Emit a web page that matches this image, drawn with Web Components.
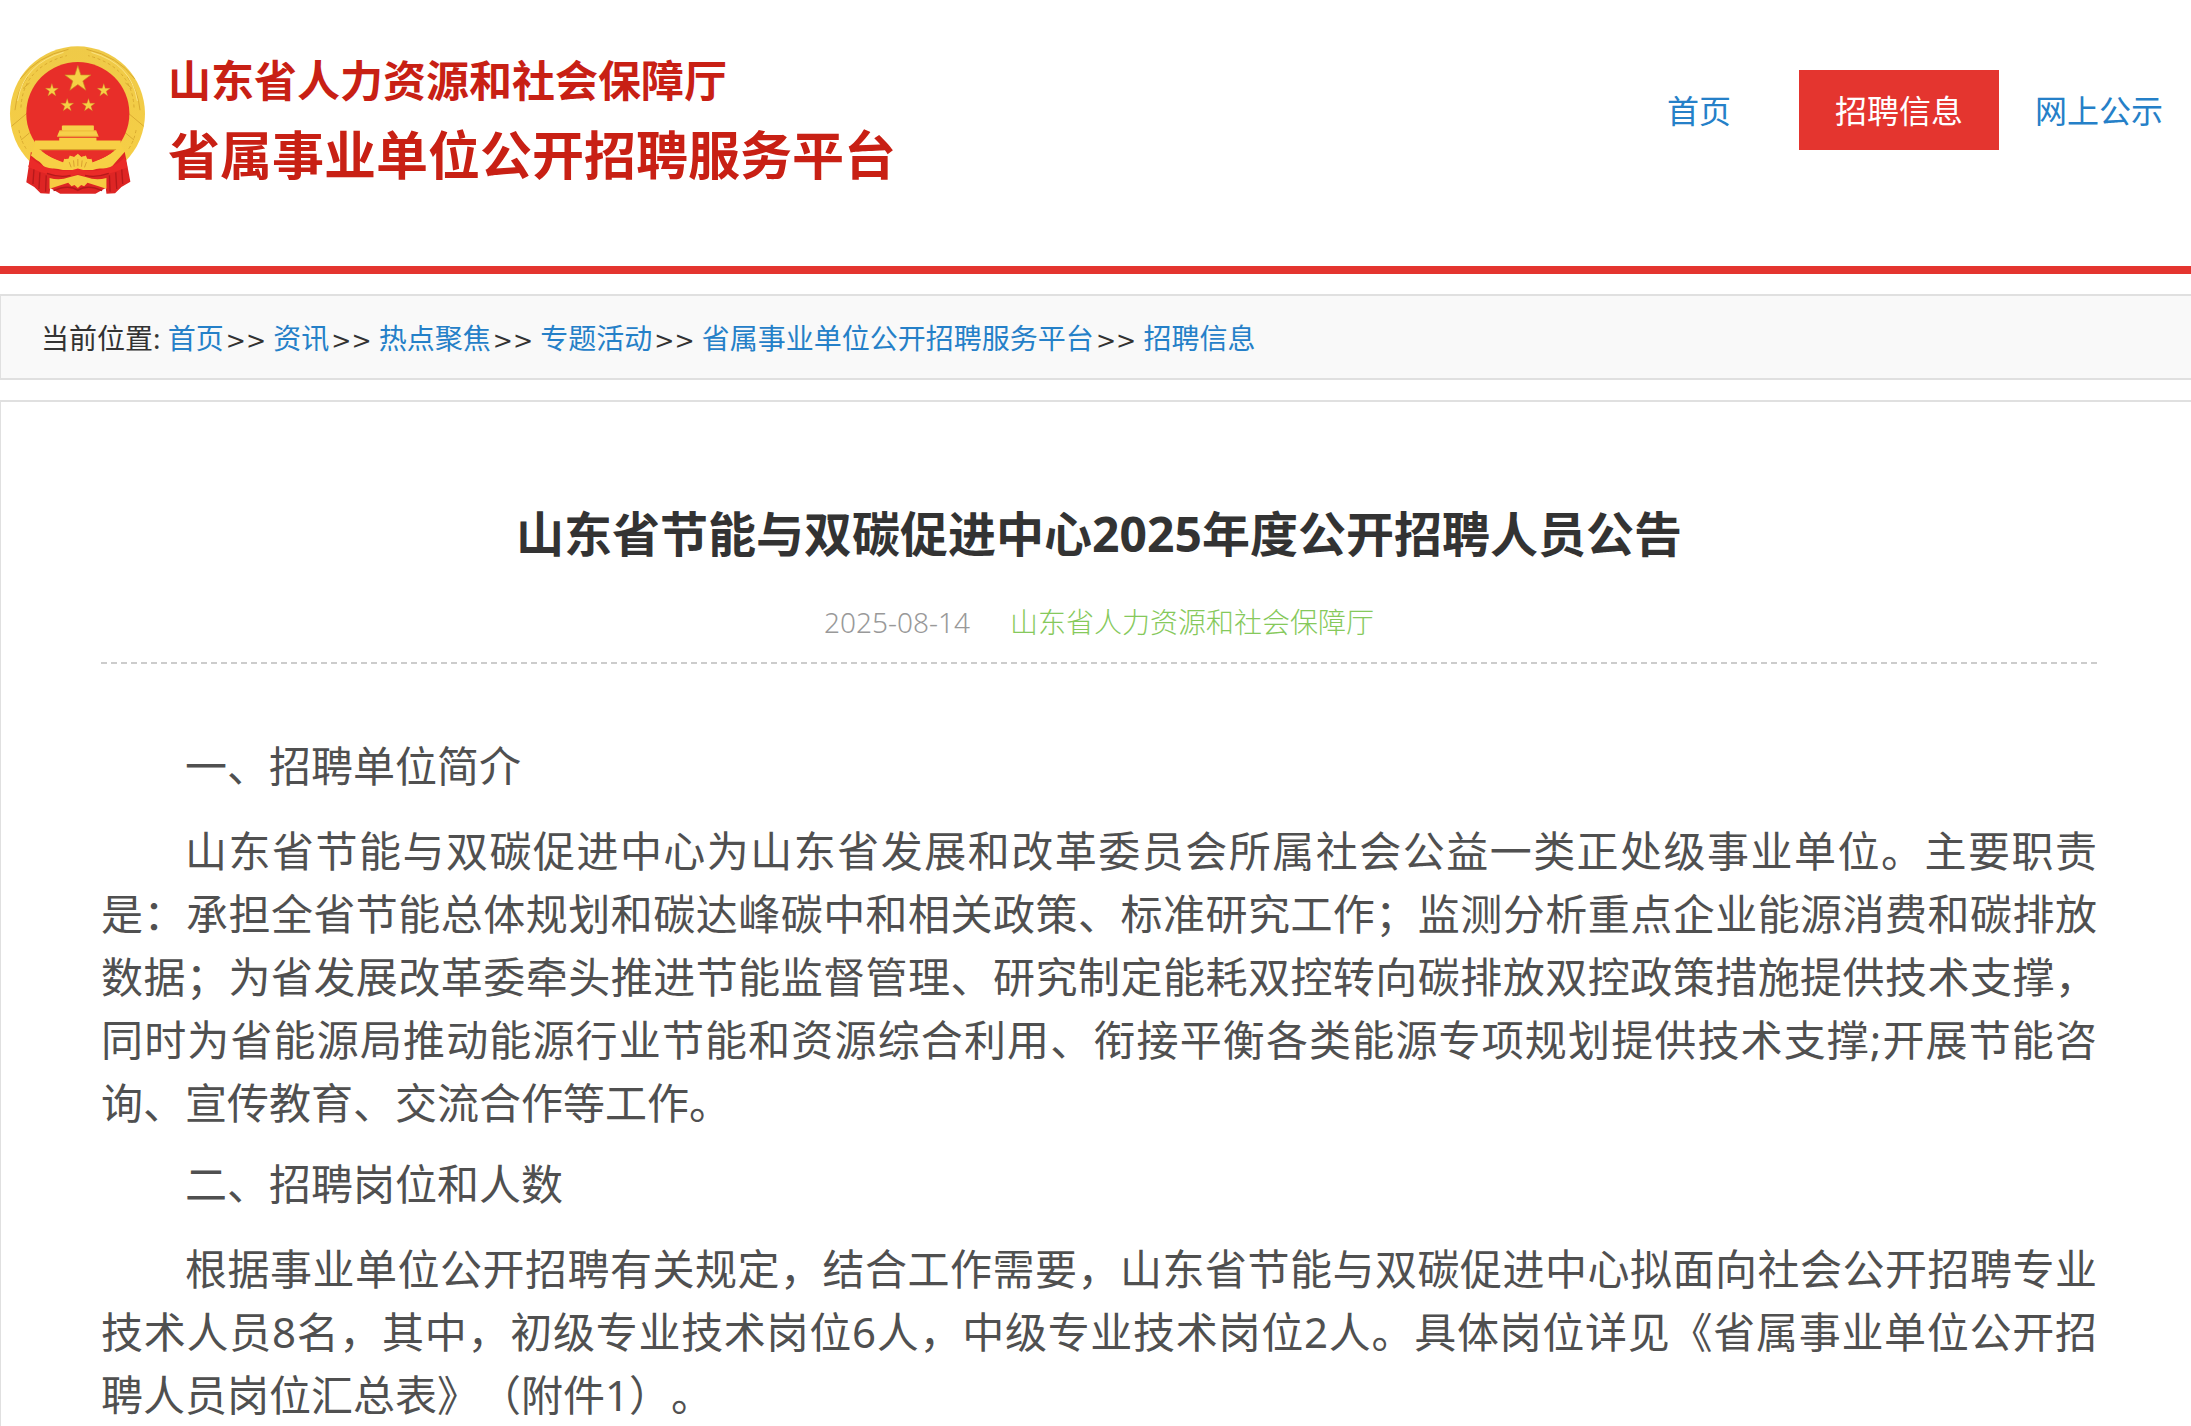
<!DOCTYPE html>
<html lang="zh-CN">
<head>
<meta charset="utf-8">
<meta name="viewport" content="width=device-width, initial-scale=1">
<title>山东省节能与双碳促进中心2025年度公开招聘人员公告</title>
<style>
    html, body { margin: 0; overflow-x: hidden; }
    body {
        --red: #e4352f;
        --link: #2580c8;
        --line: #e0e0e0;
        font-family: "Noto Sans", "Noto Sans CJK SC", sans-serif;
        font-size: 28px;
        color: #333;
        background: #fff;
        text-spacing-trim: space-all;
    }
</style>
</head>
<body>
<page-shell>
    <site-header slot="header">
        <site-logo slot="logo">
            <span slot="dept">山东省人力资源和社会保障厅</span>
            <span slot="platform">省属事业单位公开招聘服务平台</span>
        </site-logo>
        <nav-item href="#home">首页</nav-item>
        <nav-item href="#jobs" active>招聘信息</nav-item>
        <nav-item href="#notice">网上公示</nav-item>
    </site-header>
    <bread-crumb>
        <crumb-link href="#home">首页</crumb-link>
        <crumb-link href="#news">资讯</crumb-link>
        <crumb-link href="#focus">热点聚焦</crumb-link>
        <crumb-link href="#topics">专题活动</crumb-link>
        <crumb-link href="#platform">省属事业单位公开招聘服务平台</crumb-link>
        <crumb-link href="#jobs" last>招聘信息</crumb-link>
    </bread-crumb>
    <news-article>
        <span slot="title">山东省节能与双碳促进中心2025年度公开招聘人员公告</span>
        <span slot="date">2025-08-14</span>
        <span slot="source">山东省人力资源和社会保障厅</span>
        <article-section>
            <span slot="heading">一、招聘单位简介</span>
            山东省节能与双碳促进中心为山东省发展和改革委员会所属社会公益一类正处级事业单位。主要职责是：承担全省节能总体规划和碳达峰碳中和相关政策、标准研究工作；监测分析重点企业能源消费和碳排放数据；为省发展改革委牵头推进节能监督管理、研究制定能耗双控转向碳排放双控政策措施提供技术支撑，同时为省能源局推动能源行业节能和资源综合利用、衔接平衡各类能源专项规划提供技术支撑;开展节能咨询、宣传教育、交流合作等工作。
        </article-section>
        <article-section>
            <span slot="heading">二、招聘岗位和人数</span>
            根据事业单位公开招聘有关规定，结合工作需要，山东省节能与双碳促进中心拟面向社会公开招聘专业技术人员8名，其中，初级专业技术岗位6人，中级专业技术岗位2人。具体岗位详见《省属事业单位公开招聘人员岗位汇总表》（附件1）。
        </article-section>
    </news-article>
</page-shell>

<script>
// Cria o template uma vez e liga o shadow root no construtor
function define(name, html, setup) {
    const template = document.createElement('template');
    template.innerHTML = html;
    customElements.define(name, class extends HTMLElement {
        constructor() {
            super();
            this.attachShadow({ mode: 'open' });
            this.shadowRoot.appendChild(template.content.cloneNode(true));
        }
        connectedCallback() {
            if (setup) setup(this, this.shadowRoot);
        }
    });
}

const setHref = (host, root) => {
    root.querySelector('a').setAttribute('href', host.getAttribute('href') || '#');
};

define('page-shell', /*html*/`
    <style>
        :host { display: block; }
        /* as caixas passam um pouco das bordas da janela */
        main { display: flex; flex-direction: column; gap: 20px; margin: 20px -8px 0 -1px; }
    </style>
    <slot name="header"></slot>
    <main><slot></slot></main>
`);

define('site-header', /*html*/`
    <style>
        :host { display: block; border-bottom: 8px solid var(--red); }
        header {
            display: flex;
            justify-content: space-between;
            align-items: flex-start;
            min-height: 220px;
            padding: 46px 0 0 9px;
            margin-right: -8px;
        }
        nav { display: flex; margin-top: 24px; }
    </style>
    <header>
        <slot name="logo"></slot>
        <nav aria-label="主导航"><slot></slot></nav>
    </header>
`);

define('site-logo', /*html*/`
    <style>
        :host { display: flex; gap: 22px; color: #c82014; font-weight: 700; }
        svg { display: block; width: 137px; height: 148px; flex: none; }
        .names { display: flex; flex-direction: column; white-space: nowrap; }
        .dept { font-size: 43px; line-height: 70px; }
        .platform { font-size: 52px; line-height: 78px; }
    </style>
    <svg viewBox="27 47 410 445" aria-hidden="true">
        <defs>
            <linearGradient id="gold" x1="0" y1="0" x2="0" y2="1">
                <stop offset="0" stop-color="#efca48"/>
                <stop offset="1" stop-color="#f7cf45"/>
            </linearGradient>
            <path id="star" d="M0-40 9-12 39-12 15 6 24 34 0 17-24 34-15 6-39-12-9-12z"/>
        </defs>
        <circle cx="232" cy="251" r="203" fill="url(#gold)"/>
        <!-- espigas -->
        <g fill="none" stroke="#d9aa30" stroke-width="3">
            <path d="M60 146Q110 78 205 57M259 57Q354 78 404 146M34 288 84 246M431 288 381 246M44 240Q50 180 82 140M420 240Q414 180 382 140M68 175 88 158M396 175 376 158M62 330 88 308M402 330 376 308"/>
            <path stroke-dasharray="9 8" d="M62 232Q68 110 200 76M402 232Q396 110 264 76M56 300Q62 335 82 362M408 300Q402 335 382 362"/>
            <path stroke="#fbe383" d="M52 212Q70 100 190 66M412 212Q394 100 274 66"/>
        </g>
        <circle cx="233" cy="250" r="155" fill="#e82e29"/>
        <g fill="#f6cf45" stroke="#c98a21" stroke-width="2">
            <use href="#star" transform="translate(233 146)"/>
            <use href="#star" transform="translate(155 180) scale(.5)"/>
            <use href="#star" transform="translate(311 180) scale(.5)"/>
            <use href="#star" transform="translate(201 225) scale(.5)"/>
            <use href="#star" transform="translate(265 225) scale(.5)"/>
        </g>
        <!-- portão -->
        <path fill="#efbf3c" d="M187 286h93v14h8l8 20H170l8-20h9z"/>
        <path fill="#f7d04a" d="M185 287h96v13h-96zM178 304h110l5 12H173z"/>
        <path fill="#f7cf45" d="M117 331h60v-8h112v8h73v29H104v-29z"/>
        <path fill="#dba02c" d="M117 357h232v4H117z"/>
        <!-- faixas e cortinas -->
        <path fill="#de2524" d="M92 365 78 457 102 471 121 490 148 491 150 474 180 491H286L317 474 319 491 345 490 364 471 391 455 374 365 330 415H136z"/>
        <path fill="#f7cf45" d="M104 340Q120 372 190 397 192 383 207 387 210 374 222 381 232 368 243 381 255 374 259 387 272 383 276 397 346 372 362 340L374 365Q340 408 278 420H188Q125 408 92 376z"/>
        <path fill="#e82e29" d="M122 361H344Q320 382 276 395 272 381 259 385 255 372 243 379 232 366 222 379 210 372 207 385 192 381 190 395 146 382 122 361z"/>
        <path fill="#f7cf45" d="M186 408 192 386 203 390 209 376 221 382 233 371 245 382 257 376 263 390 274 386 280 408 233 425z"/>
        <path fill="#eb2b28" d="M92 380Q112 410 180 422 212 424 233 415 254 424 286 422 354 410 374 380L382 412Q340 428 300 438 260 445 233 432 206 445 166 438 110 425 84 410z"/>
        <path fill="#f6cb42" d="M148 444Q178 452 207 442L233 435 259 442Q288 452 319 444V476L262 458 252 469 243 465 233 474 223 465 214 469 204 458 148 476z"/>
        <path fill="none" stroke="#b5191b" stroke-width="4" d="M101 418 98 462M119 427 116 477M138 436 136 485M365 418 368 462M347 427 350 477M328 436 330 485M140 430Q180 444 211 436M326 430Q286 444 255 436M160 482Q205 462 233 481 261 462 306 482"/>
        <path fill="none" stroke="#d9a030" stroke-width="3" d="M213 412 207 396M222 410 220 391M233 408V387M244 410 246 391M253 412 259 396"/>
    </svg>
    <div class="names">
        <div class="dept"><slot name="dept"></slot></div>
        <div class="platform"><slot name="platform"></slot></div>
    </div>
`);

define('nav-item', /*html*/`
    <style>
        :host { display: block; }
        a {
            display: block;
            width: 200px;
            padding-top: 2px;
            line-height: 78px;
            font-size: 32px;
            text-align: center;
            text-decoration: none;
            color: var(--link);
        }
        :host([active]) a { background: var(--red); color: #fff; }
    </style>
    <a><slot></slot></a>
`, setHref);

define('bread-crumb', /*html*/`
    <style>
        :host {
            display: block;
            border: 2px solid var(--line);
            background: #f9f9f9;
        }
        nav { padding: 2px 40px 0; line-height: 80px; }
    </style>
    <nav aria-label="当前位置">当前位置: <slot></slot></nav>
`);

define('crumb-link', /*html*/`
    <style>
        :host { display: inline; }
        a { color: var(--link); text-decoration: none; }
        .sep { margin-left: 2px; font-family: "DejaVu Sans", sans-serif; font-size: 24px; line-height: 1; }
        :host([last]) .sep { display: none; }
    </style>
    <a><slot></slot></a><span class="sep">&gt;&gt;</span>
`, setHref);

define('news-article', /*html*/`
    <style>
        :host {
            display: block;
            border: 2px solid var(--line);
            padding: 96px 100px;
        }
        h1 {
            margin: 0;
            font-size: 48px;
            line-height: 72px;
            text-align: center;
        }
        .info {
            display: flex;
            justify-content: center;
            gap: 40px;
            padding: 32px 0 20px;
            line-height: 40px;
            font-weight: 300;
            border-bottom: 2px dashed #ccc;
        }
        .date { color: #999; }
        .source { color: #86c95b; }
        .content { padding-top: 52px; color: #505050; }
    </style>
    <article>
        <h1><slot name="title"></slot></h1>
        <div class="info">
            <time class="date"><slot name="date"></slot></time>
            <span class="source"><slot name="source"></slot></span>
        </div>
        <div class="content"><slot></slot></div>
    </article>
`);

define('article-section', /*html*/`
    <style>
        :host { display: block; font-size: 42px; line-height: 63px; }
        h2 {
            margin: 18px 0 22px;
            font-size: inherit;
            font-weight: 400;
            text-indent: 2em;
        }
        p { margin: 0; text-indent: 2em; text-align: justify; }
    </style>
    <h2><slot name="heading"></slot></h2>
    <p><slot></slot></p>
`);
</script>
</body>
</html>
